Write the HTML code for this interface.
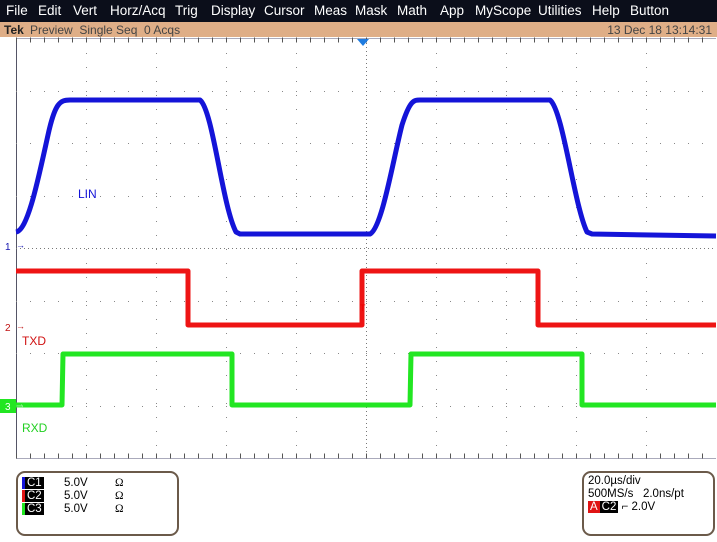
<!DOCTYPE html>
<html><head><style>
body{margin:0;width:717px;height:542px;overflow:hidden;background:#fff;font-family:"Liberation Sans",sans-serif;position:relative}
#menu{position:absolute;left:0;top:0;width:717px;height:22px;background:#0b0e1a;color:#fff;font-size:13.5px}
#menu span{position:absolute;top:3px}
#stat{position:absolute;left:0;top:22px;width:717px;height:15px;background:#dfae87;font-size:12px;color:#444}
.box{position:absolute;border:2px solid #6b5a4a;border-radius:9px;background:#fff;font-size:11.5px;color:#000}
.tag{display:inline-block;background:#000;color:#fff;padding:0 2px;line-height:12px}
</style></head><body>
<div id="menu">
<span style="left:6px">File</span><span style="left:38px">Edit</span><span style="left:73px">Vert</span><span style="left:110px">Horz/Acq</span><span style="left:175px">Trig</span><span style="left:211px">Display</span><span style="left:264px">Cursor</span><span style="left:314px">Meas</span><span style="left:355px">Mask</span><span style="left:397px">Math</span><span style="left:440px">App</span><span style="left:475px">MyScope</span><span style="left:538px">Utilities</span><span style="left:592px">Help</span><span style="left:630px">Button</span>
</div>
<div id="stat"><b style="position:absolute;left:4px;top:1px;color:#222">Tek</b><span style="position:absolute;left:30px;top:1px">Preview&nbsp; Single Seq&nbsp; 0 Acqs</span><span style="position:absolute;right:5px;top:1px">13 Dec 18 13:14:31</span></div>
<svg width="717" height="542" style="position:absolute;left:0;top:0">
<g stroke="#999" stroke-width="1" fill="none">
<line x1="16.5" y1="38" x2="16.5" y2="459" stroke="#556" />
<line x1="16" y1="38.5" x2="716" y2="38.5" stroke="#aab"/>
<line x1="16" y1="458.5" x2="716" y2="458.5" stroke="#aab"/>
<g stroke-dasharray="1,13" stroke="#888">
<line x1="86.5" y1="39" x2="86.5" y2="458"/><line x1="156.5" y1="39" x2="156.5" y2="458"/><line x1="226.5" y1="39" x2="226.5" y2="458"/><line x1="296.5" y1="39" x2="296.5" y2="458"/><line x1="436.5" y1="39" x2="436.5" y2="458"/><line x1="506.5" y1="39" x2="506.5" y2="458"/><line x1="576.5" y1="39" x2="576.5" y2="458"/><line x1="646.5" y1="39" x2="646.5" y2="458"/>
<line x1="16" y1="91.5" x2="716" y2="91.5"/><line x1="16" y1="143.5" x2="716" y2="143.5"/><line x1="16" y1="196.5" x2="716" y2="196.5"/><line x1="16" y1="301.5" x2="716" y2="301.5"/><line x1="16" y1="353.5" x2="716" y2="353.5"/><line x1="16" y1="406.5" x2="716" y2="406.5"/>
</g>
<line x1="366.5" y1="39" x2="366.5" y2="458" stroke-dasharray="1,3" stroke="#777"/>
<line x1="16" y1="248.5" x2="716" y2="248.5" stroke-dasharray="1,3" stroke="#777"/>
<line x1="16" y1="40" x2="716" y2="40" stroke-dasharray="1,13" stroke="#555" stroke-width="5"/>
<line x1="16" y1="456" x2="716" y2="456" stroke-dasharray="1,13" stroke="#555" stroke-width="5"/>
</g>
<path d="M357,39 L369,39 L363,46 Z" fill="#1e7be0"/>
<g fill="none" stroke-width="5" stroke-linejoin="round">
<path stroke="#1414d8" d="M16,232 C28,230 38,180 48,135 C55,103 60,100 70,100 L200,100 C213,110 222,205 236,232 L240,234 L370,234 C382,228 393,160 402,125 C410,100 414,100 420,100 L550,100 C563,110 574,205 587,232 L592,234 L716,236"/>
<path stroke="#ee1414" d="M16,271 L188,271 L188,325 L362,325 L362,271 L538,271 L538,325 L716,325"/>
<path stroke="#22e622" d="M16,405 L62,405 L63,354 L232,354 L232,405 L410,405 L411,354 L582,354 L582,405 L716,405"/>
</g>
<text x="360" y="311" fill="#e00" font-size="9" font-family="Liberation Sans">T</text>
<g font-family="Liberation Sans" font-size="12">
<text x="78" y="198" fill="#1414d8">LIN</text>
<text x="22" y="345" fill="#d01010">TXD</text>
<text x="22" y="432" fill="#22d022">RXD</text>
<text x="5" y="250" fill="#1414b0" font-size="10">1</text><text x="16" y="248" fill="#1414b0" font-size="9">→</text>
<text x="5" y="331" fill="#c01010" font-size="10">2</text><text x="16" y="329" fill="#c01010" font-size="9">→</text>
<rect x="0" y="399" width="16" height="14" fill="#22e622"/>
<text x="5" y="410" fill="#fff" font-size="10">3</text><text x="16" y="409" fill="#9e9" font-size="9">⇒</text>
</g>
</svg>
<div class="box" style="left:16px;top:471px;width:159px;height:61px">
<div style="position:absolute;left:4px;top:4px;line-height:13px">
<div><span style="display:inline-block;width:3px;height:12px;background:#1414d8;vertical-align:top"></span><span class="tag">C1</span></div>
<div><span style="display:inline-block;width:3px;height:12px;background:#e01414;vertical-align:top"></span><span class="tag">C2</span></div>
<div><span style="display:inline-block;width:3px;height:12px;background:#22e622;vertical-align:top"></span><span class="tag">C3</span></div>
</div>
<div style="position:absolute;left:46px;top:4px;line-height:13px">5.0V<br>5.0V<br>5.0V</div>
<div style="position:absolute;left:97px;top:4px;line-height:13px;font-family:'Liberation Serif'">Ω<br>Ω<br>Ω</div>
</div>
<div class="box" style="left:582px;top:471px;width:129px;height:61px">
<div style="position:absolute;left:4px;top:2px;line-height:13px">20.0µs/div<br>500MS/s&nbsp;&nbsp; 2.0ns/pt<br><span style="background:#e01414;color:#fff;padding:0 2px">A</span><span class="tag">C2</span> ⌐ 2.0V</div>
</div>
</body></html>
